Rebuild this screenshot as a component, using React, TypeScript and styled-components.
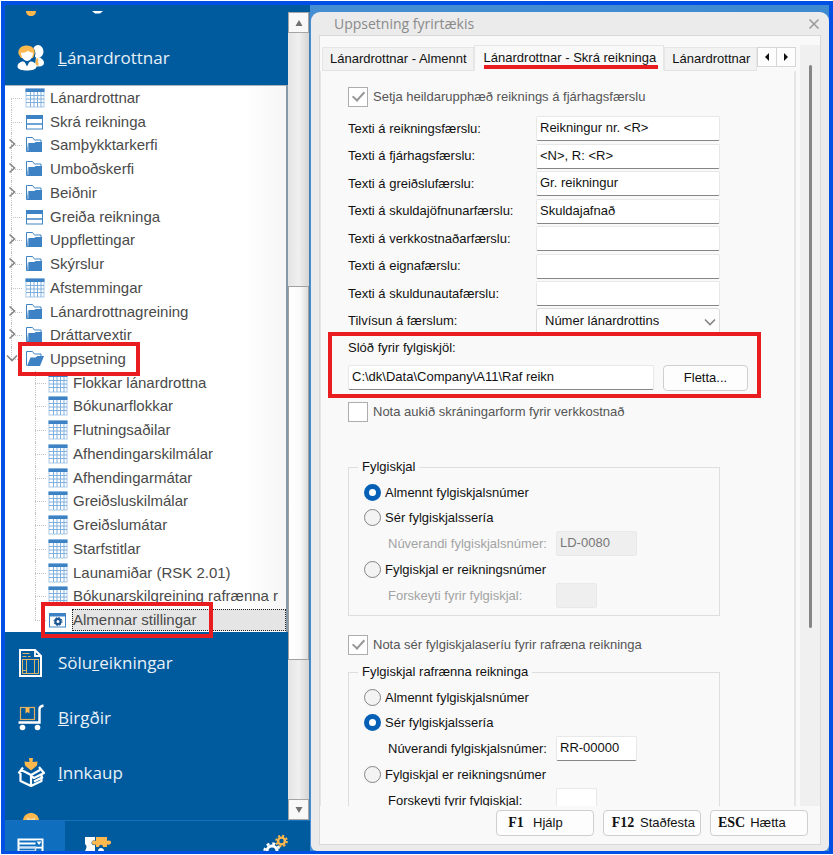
import React, { useState } from "react";
import styled, { createGlobalStyle, css } from "styled-components";

const GlobalStyle = createGlobalStyle`
  * { box-sizing: border-box; }
  body { margin: 0; background: #fff; }
  button, input, select { font: inherit; color: inherit; margin: 0; }
  svg { display: block; }
`;

const RED = "#e91d1f";
const UI_FONT = '"Liberation Sans", Arial, sans-serif';
const NAV_FONT = '"Open Sans", "Noto Sans", sans-serif';

const Page = styled.div`
  height: 100vh;
  padding: 1px 0 1px 1px;
`;

const Frame = styled.div`
  display: flex;
  height: 100%;
  border: 4px solid #0050e6;
  border-bottom-width: 3px;
  background: linear-gradient(90deg, #4a90d6, #3d8ad0);
  overflow: hidden;
`;

const Sidebar = styled.aside`
  flex: none;
  width: 305px;
  display: flex;
  flex-direction: column;
  background: #005a9e;
  font-family: ${NAV_FONT};
`;

const SidebarBody = styled.div`
  flex: 1;
  min-height: 0;
  display: flex;
`;

const ModuleList = styled.nav`
  flex: 1;
  min-width: 0;
  display: flex;
  flex-direction: column;
  overflow: hidden;
`;

const ModuleButton = styled.button`
  flex: none;
  height: 55px;
  display: flex;
  align-items: center;
  gap: 11px;
  padding: 0 0 0 12px;
  border: 0;
  background: none;
  color: #e8f1f8;
  font-size: 17px;
  text-align: left;
`;

const ClippedTop = styled.div`
  flex: none;
  height: 25px;
  padding: 6px 0 0 21px;
`;

const ClippedBottom = styled.div`
  flex: none;
  height: 20px;
  padding: 12px 0 0 18px;
  overflow: hidden;
`;

const Tree = styled.ul`
  flex: 1;
  min-height: 0;
  display: grid;
  grid-auto-rows: 1fr;
  margin: 0 0 3px;
  padding: 0;
  list-style: none;
  background: linear-gradient(90deg, #fff 85%, #f6f6f6);
  border-top: 1px solid #a9b4bd;
  border-right: 2px solid #8799a8;
  color: #4a4a4a;
  font: 15px/20px ${UI_FONT};
`;

const TreeRow = styled.li<{ $child?: boolean; $first?: boolean; $last?: boolean }>`
  position: relative;
  display: flex;
  align-items: center;
  padding-left: ${(p) => (p.$child ? 43 : 20)}px;
  min-width: 0;

  &::before {
    content: "";
    position: absolute;
    left: ${(p) => (p.$child ? 30 : 6)}px;
    top: ${(p) => (p.$first ? "50%" : "0")};
    bottom: ${(p) => (p.$last ? "50%" : "0")};
    border-left: 1px dotted #c4c4c4;
  }
  &::after {
    content: "";
    position: absolute;
    left: ${(p) => (p.$child ? 30 : 6)}px;
    top: 50%;
    width: 11px;
    border-top: 1px dotted #c4c4c4;
  }
`;

const TreeItem = styled.span<{ $fill?: boolean }>`
  position: relative;
  display: flex;
  align-items: center;
  gap: 4px;
  min-width: 0;
  ${(p) => p.$fill && "flex: 1;"}

  svg { flex: none; }
`;

const Mark = styled.span<{ $wide?: boolean }>`
  position: absolute;
  z-index: 2;
  top: -7px;
  bottom: -7px;
  left: -7px;
  ${(p) => (p.$wide ? "width: 172px;" : "right: -14px;")}
  border: 4px solid ${RED};
`;

const TreeLabel = styled.span<{ $selected?: boolean }>`
  padding-left: 1px;
  white-space: nowrap;
  ${(p) =>
    p.$selected &&
    css`
      flex: 1;
      line-height: 22px;
      background: #e5e5e5;
      outline: 1px dotted #222;
      outline-offset: -1px;
    `}
`;

const Expander = styled.button`
  position: absolute;
  z-index: 1;
  left: 0;
  top: 50%;
  width: 14px;
  height: 14px;
  margin-top: -8px;
  padding: 0;
  border: 0;
  background: none;
  display: grid;
  place-items: center;
`;

const ScrollColumn = styled.div`
  flex: none;
  width: 22px;
  margin: 7px 0 0;
  display: flex;
  flex-direction: column;
  background: linear-gradient(90deg, #e4e4e4, #f0f0f0 50%, #d4d4d4);
  border-right: 1px solid #4a80b0;
`;

const ScrollArrow = styled.button`
  flex: none;
  height: 21px;
  padding: 0;
  border: 1px solid #a5a5a5;
  background: #f8f8f8;
  color: #707070;
  display: grid;
  place-items: center;
`;

const ScrollThumb = styled.div`
  flex: 373 0 0;
  border: 1px solid #a0a0a0;
  background: linear-gradient(90deg, #fff, #fafafa 60%, #dcdcdc);
`;

const Space = styled.div<{ $grow: number }>`
  flex: ${(p) => p.$grow} 0 0;
`;

const BottomBar = styled.div`
  flex: none;
  height: 31px;
  display: flex;
  align-items: flex-start;
  border-top: 1px solid #1a70bd;
  overflow: hidden;
`;

const BottomTab = styled.button<{ $active?: boolean; $end?: boolean }>`
  height: 40px;
  width: 60px;
  padding: ${(p) => (p.$end ? "12px 0 0 12px" : p.$active ? "14px 0 0 12px" : "14px 0 0 18px")};
  border: 0;
  display: flex;
  align-items: flex-start;
  background: ${(p) => (p.$active ? "#106ebe" : "none")};
  ${(p) => p.$end && "margin-left: auto;"}
`;

const Dialog = styled.section`
  flex: 1;
  min-width: 0;
  margin: 7px 0 0 1px;
  padding: 0 8px 6px;
  display: flex;
  flex-direction: column;
  background: #ebebeb;
  border-radius: 9px 9px 6px 6px;
  color: #111;
  font: 13px/16px ${UI_FONT};
`;

const TitleBar = styled.header`
  flex: none;
  height: 23px;
  display: flex;
  align-items: center;
  justify-content: space-between;
  padding: 0 1px 0 15px;
  color: #8a8a8a;
  font: 14px/20px ${NAV_FONT};
`;

const Title = styled.h1`
  margin: 0;
  font: inherit;
`;

const CloseButton = styled.button`
  padding: 0;
  border: 0;
  width: 12px;
  height: 12px;
  background: none;
  display: grid;
`;

const Panel = styled.div`
  flex: 1;
  min-height: 0;
  display: flex;
  flex-direction: column;
  border: 1px solid #d9d9d9;
  background: #f9f9f9;
`;

const Scroller = styled.div`
  flex: 1;
  min-height: 0;
  margin-top: 9px;
  display: flex;
`;

const TabArea = styled.div`
  flex: 1;
  min-width: 0;
  display: flex;
  flex-direction: column;
`;

const Gutter = styled.div`
  flex: none;
  width: 20px;
  margin-left: 4px;
  padding: 20px 0 0 9px;
  display: flex;
  flex-direction: column;
  background: #f0f0f0;
`;

const GutterThumb = styled.div`
  flex: 562 0 0;
  width: 3px;
  border-radius: 2px;
  background: #858585;
`;

const TabStrip = styled.div`
  flex: none;
  height: 26px;
  display: flex;
  align-items: flex-end;
  padding-left: 2px;
`;

const Tab = styled.button<{ $active?: boolean; $cut?: boolean }>`
  flex: none;
  height: ${(p) => (p.$active ? 26 : 24)}px;
  padding: ${(p) => (p.$active ? "0 5px 1px 9px" : "0 6px 0 7px")};
  border: 1px solid #e6e6e6;
  border-bottom-color: ${(p) => (p.$active ? "#f9f9f9" : "#e2e2e2")};
  background: ${(p) => (p.$active ? "#f9f9f9" : "#f2f2f2")};
  white-space: nowrap;
  ${(p) => p.$cut && "flex: 1 1 0; min-width: 0; overflow: hidden; text-align: left;"}
`;

const TabText = styled.span<{ $marked?: boolean }>`
  display: block;
  ${(p) => p.$marked && `height: 22px; padding: 3px 2px 0 0; border-bottom: 4px solid ${RED};`}
`;

const TabArrows = styled.div`
  flex: none;
  display: flex;
  height: 20px;
  align-self: flex-start;
  margin-top: 2px;
`;

const TabArrow = styled.button`
  width: 20px;
  padding: 0;
  border: 1px solid #d6d6d6;
  background: #fdfdfd;
  display: grid;
  place-items: center;
  & + & { margin-left: -1px; }
`;

const TabPage = styled.div`
  flex: 1;
  min-height: 0;
  overflow: hidden;
  padding: 16px 74px 0 27px;
  border: solid #e6e6e6;
  border-width: 0 2px 0 1px;
`;

const CheckLine = styled.label<{ $gap?: number }>`
  display: flex;
  align-items: center;
  gap: 5px;
  height: 20px;
  margin-top: ${(p) => p.$gap ?? 0}px;
  color: #555;
  white-space: nowrap;
`;

const CheckBox = styled.input.attrs({ type: "checkbox" })`
  appearance: none;
  flex: none;
  width: 20px;
  height: 20px;
  border: 1px solid #adadad;
  background: #fff;
  display: grid;
  place-items: center;

  &:checked::after {
    content: "";
    width: 5px;
    height: 10px;
    margin-top: -4px;
    border: solid #969696;
    border-width: 0 2px 2px 0;
    transform: rotate(42deg);
  }
`;

const FieldGrid = styled.div`
  display: grid;
  grid-auto-rows: 1fr;
  height: 220px;
  margin-top: 8px;
`;

const FieldRow = styled.div`
  display: grid;
  grid-template-columns: 188px 1fr;
  align-items: center;
`;

const TextBox = styled.input<{ $short?: number }>`
  width: ${(p) => (p.$short ? `${p.$short}px` : "100%")};
  min-width: 0;
  height: 25px;
  padding: 0 3px 2px;
  border: 1px solid #e8e8e8;
  border-bottom-color: #868686;
  border-radius: 2px;
  background: #fff;
  outline: 0;

  &:disabled {
    background: #efefef;
    border-color: #e9e9e9;
    color: #777;
  }
`;

const SelectWrap = styled.div`
  position: relative;
  svg { position: absolute; right: 4px; top: 8px; pointer-events: none; }
`;

const Select = styled.select`
  appearance: none;
  display: block;
  width: 100%;
  height: 27px;
  padding: 0 24px 0 8px;
  border: 1px solid #dcdcdc;
  border-radius: 3px;
  background: #fdfdfd;
  outline: 0;
`;

const PathGroup = styled.div`
  position: relative;
  z-index: 1;
  margin: -3px -41px 0 -20px;
  padding: 4px 9px 3px 16px;
  border: 4px solid ${RED};
`;

const PathLabel = styled.label`
  display: block;
  height: 25px;
`;

const PathRow = styled.div`
  display: flex;
  gap: 9px;
`;

const PushButton = styled.button<{ $wide?: boolean }>`
  flex: none;
  width: ${(p) => (p.$wide ? 98 : 85)}px;
  height: 26px;
  padding: ${(p) => (p.$wide ? "0 0 0 7px" : "0")};
  border: 1px solid #cfcfcf;
  border-radius: 4px;
  background: #fdfdfd;
  display: flex;
  align-items: center;
  justify-content: ${(p) => (p.$wide ? "flex-start" : "center")};
  gap: 5px;
  white-space: nowrap;
`;

const KeyName = styled.b`
  min-width: 24px;
  font: bold 14px/16px "Liberation Serif", serif;
`;

const Group = styled.fieldset<{ $gap: number }>`
  margin: ${(p) => p.$gap}px 0 0;
  padding: 5px 0 6px 15px;
  min-width: 0;
  border: 1px solid #dedede;
`;

const Legend = styled.legend`
  margin-left: -6px;
  padding: 0 4px;
`;

const RadioLine = styled.label`
  display: flex;
  align-items: center;
  gap: 4px;
  height: 25px;
`;

const Radio = styled.input.attrs({ type: "radio" })`
  appearance: none;
  flex: none;
  width: 17px;
  height: 17px;
  border: 1px solid #858585;
  border-radius: 50%;
  background: #f3f3f3;

  &:checked {
    border: 5px solid #0560b6;
    background: #fff;
  }
`;

const SubRow = styled.div<{ $muted?: boolean }>`
  display: grid;
  grid-template-columns: 168px 1fr;
  align-items: center;
  height: 27px;
  padding-left: 24px;
  color: ${(p) => (p.$muted ? "#a3a3a3" : "inherit")};
`;

const Footer = styled.footer`
  flex: none;
  display: flex;
  justify-content: flex-end;
  gap: 9px;
  padding: 4px 12px 8px;
`;

/* ---------- icons ---------- */

const GridIcon = () => (
  <svg width="20" height="20" viewBox="0 0 20 20">
    <rect x="1" y="1" width="18" height="18" fill="#fff" stroke="#a9c9e8" />
    <path d="M5.5 4v15M9 4v15M12.5 4v15M16 4v15M1 7.5h18M1 11h18M1 14.500h18" stroke="#7fb0de" />
    <path d="M.5 .500h19v3.500h-19z" fill="#3d82c4" />
  </svg>
);

const ListIcon = () => (
  <svg width="20" height="20" viewBox="0 0 20 20">
    <rect x="1.500" y="3.500" width="16" height="13.500" fill="#fff" stroke="#3f85c6" />
    <path d="M1 3h17v4H1z" fill="#3d82c4" />
    <path d="M1 12h17" stroke="#3f85c6" strokeWidth="1.500" />
  </svg>
);

const FolderIcon = () => (
  <svg width="20" height="20" viewBox="0 0 20 20">
    <path d="M1.500 16.500v-14h6l2 2.500h6.500v2" fill="#fff" stroke="#3f85c6" />
    <path d="M3 8h6l2-1h6v10H1.500z" fill="#3d82c4" />
    <path d="M3 7v9" stroke="#fff" strokeWidth=".6" />
  </svg>
);

const OpenFolderIcon = () => (
  <svg width="20" height="20" viewBox="0 0 20 20">
    <path d="M1.500 16.500v-14h6l2 2.500h6.500v3" fill="#fff" stroke="#3f85c6" />
    <path d="M5.500 8.500h5l2-1.500h6.500l-4 10H2z" fill="#3d82c4" />
  </svg>
);

const SettingsIcon = () => (
  <svg width="20" height="20" viewBox="0 0 20 20">
    <rect x="1.500" y="3.500" width="16" height="13.500" fill="#fff" stroke="#3f85c6" />
    <path d="M1 3h17v3.500H1z" fill="#3d82c4" />
    <circle cx="10" cy="11.500" r="2.600" fill="none" stroke="#1b5592" strokeWidth="2.200" />
    <circle cx="10" cy="11.500" r="4" fill="none" stroke="#1b5592" strokeWidth="1" strokeDasharray="1.600 1.540" />
  </svg>
);

const PeopleIcon = () => (
  <svg width="30" height="28" viewBox="0 0 30 28">
    <ellipse cx="21" cy="7.500" rx="5.500" ry="6.500" fill="#fff" />
    <path d="M19 13c5 0 8 3 8 6 0 2-2 3.500-5 3.500h-4z" fill="#fff" />
    <path d="M19 15l2-1 .5 8-3-1z" fill="#ffb84d" />
    <circle cx="10" cy="9.500" r="8.500" fill="#005a9e" />
    <path d="M1.500 10C.5 4 5 1.500 10 1.500S18.500 5 17.500 10L16 14H4z" fill="#ffb84d" />
    <path d="M4 8.500c3 1 6-.5 7-2 1 1.500 3 2 5 2 0 5-3 8.500-6 8.500s-6-4-6-8.500z" fill="#fff" />
    <path d="M.5 22.500c0-3 3-5 6-5l3.500 2 3.500-2c3 0 6 2 6 5 0 3-5 4-9.500 4s-9.500-1-9.500-4z" fill="#fff" />
    <path d="M7.500 17.500l2.500 5 2.500-5" fill="#005a9e" />
  </svg>
);

const InvoiceIcon = () => (
  <svg width="30" height="30" viewBox="0 0 30 30" fill="none">
    <path d="M3 2h15l6 6v20H3z" stroke="#fff" strokeWidth="2" />
    <path d="M18 2v6h6" stroke="#fff" strokeWidth="1.800" />
    <path d="M5.500 5.500h7M5.500 8.500h4M11 8.500h2.500M5.500 11.500h16.500M5.500 11v14.500h16V11.500M9.500 11.500v14M17.500 11.500v14M5.500 22.500h4" stroke="#d9b56c" />
  </svg>
);

const CartIcon = () => (
  <svg width="30" height="30" viewBox="0 0 30 30" fill="none">
    <rect x="3.500" y="4.500" width="14" height="12" stroke="#e0b062" strokeWidth="1.200" />
    <path d="M8.500 5h4v5.500l-2-1.500-2 1.500z" fill="#ffb84d" />
    <path d="M1.500 19.500H22.500V6c0-2 1.500-3 4-3.500" stroke="#fff" strokeWidth="2.400" />
    <circle cx="5.500" cy="24.500" r="2.800" fill="#fff" />
    <circle cx="20.500" cy="24.500" r="2.800" fill="#fff" />
  </svg>
);

const BoxIcon = () => (
  <svg width="30" height="30" viewBox="0 0 30 30" fill="none">
    <g stroke="#fff" strokeWidth="2.200" strokeLinejoin="round">
      <path d="M3.500 15v8l10.500 5 10.500-5v-6M14 17v11" />
      <path d="M6 9.500l-4.500 6M3.500 11.500L14 17l9-5M22 9l5 6-10 5M14 17l3 3.500" />
      <path d="M17 23.500l9-4.500" />
    </g>
    <path d="M12 0h4l-.5 4 5-.5-.5 4-6 5-6-5-.5-4 5 .500z" fill="#ffb84d" />
  </svg>
);

const FaceTopIcon = () => (
  <svg width="16" height="8" viewBox="0 0 16 8">
    <path d="M0 8C1 3 4 1 8 1s7 2 8 7z" fill="#ffb84d" />
    <path d="M4 5.500l4 1.500 4-1.500v2.500H4z" fill="#f6d9a8" />
  </svg>
);

const TopRemnants = () => (
  <svg width="90" height="6" viewBox="0 0 90 6">
    <path d="M0 0h10c0 3-2 5-5 5S0 3 0 0z" fill="#ffb84d" />
    <path d="M66 0h11l-3 2.500h-5z" fill="#fff" />
  </svg>
);

const WindowIcon = () => (
  <svg width="27" height="18" viewBox="0 0 27 18">
    <path d="M1.500 5.500h24v8h-24zM1.500 9.500h17M1.500 13v5M25.500 13v5" fill="none" stroke="#fff" strokeWidth="2" transform="translate(0 -1)" />
    <path d="M1.500 12.500h17v6M1.500 16h17" fill="none" stroke="#cfe3f5" strokeWidth="1.500" />
    <path d="M19.500 5.500h5v6h-5z" fill="#106ebe" />
    <path d="M19.500 6.500h5L22 10z" fill="#fff" />
  </svg>
);

const PuzzleIcon = () => (
  <svg width="28" height="16" viewBox="0 0 28 16">
    <path d="M2 2h10v3.500a2.500 2.500 0 1 0 0 4.500V16H2c2-4 2-5 0-7z" fill="#fff" />
    <path d="M13 2h11v4c3-1 4 0 4 1.500S27 10 24 9.500V12h-4c0-3-4-3-4 0h-3V9.500c-3 1-4-.5-4-2S10 5 13 6z" fill="#ffb84d" />
    <path d="M15 16c0-4 6-4 6 0z" fill="#fff" />
  </svg>
);

const GearsIcon = () => (
  <svg width="28" height="18" viewBox="0 0 28 18" fill="none">
    <circle cx="19.500" cy="8" r="3.400" stroke="#ffb84d" strokeWidth="2.400" />
    <circle cx="19.500" cy="8" r="5.300" stroke="#ffb84d" strokeWidth="2" strokeDasharray="2.100 2.060" />
    <circle cx="10" cy="18" r="5" stroke="#fff" strokeWidth="3" />
    <circle cx="10" cy="18" r="7.500" stroke="#fff" strokeWidth="2.400" strokeDasharray="3 2.900" />
  </svg>
);

const Chevron = ({ down = false }: { down?: boolean }) => (
  <svg width="12" height="12" viewBox="0 0 12 12" fill="none" stroke="#858585" strokeWidth="1.600">
    <path d={down ? "M1 3.500l5 5 5-5" : "M3.500 1.500L8.500 6l-5 4.500"} />
  </svg>
);

const Arrow = ({ d, color = "#707070" }: { d: string; color?: string }) => (
  <svg width="8" height="8" viewBox="0 0 8 8">
    <path d={d} fill={color} />
  </svg>
);

/* ---------- data ---------- */

type IconKind = "grid" | "list" | "folder" | "open" | "settings";

const ICONS: Record<IconKind, () => React.JSX.Element> = {
  grid: GridIcon,
  list: ListIcon,
  folder: FolderIcon,
  open: OpenFolderIcon,
  settings: SettingsIcon,
};

const ROOT_ITEMS: [string, IconKind][] = [
  ["Lánardrottnar", "grid"],
  ["Skrá reikninga", "list"],
  ["Samþykktarkerfi", "folder"],
  ["Umboðskerfi", "folder"],
  ["Beiðnir", "folder"],
  ["Greiða reikninga", "list"],
  ["Uppflettingar", "folder"],
  ["Skýrslur", "folder"],
  ["Afstemmingar", "grid"],
  ["Lánardrottnagreining", "folder"],
  ["Dráttarvextir", "folder"],
  ["Uppsetning", "open"],
];

const CHILD_ITEMS: [string, IconKind][] = [
  ["Flokkar lánardrottna", "grid"],
  ["Bókunarflokkar", "grid"],
  ["Flutningsaðilar", "grid"],
  ["Afhendingarskilmálar", "grid"],
  ["Afhendingarmátar", "grid"],
  ["Greiðsluskilmálar", "grid"],
  ["Greiðslumátar", "grid"],
  ["Starfstitlar", "grid"],
  ["Launamiðar (RSK 2.01)", "grid"],
  ["Bókunarskilgreining rafrænna r", "grid"],
  ["Almennar stillingar", "settings"],
];

const TEXT_FIELDS: [string, string][] = [
  ["Texti á reikningsfærslu:", "Reikningur nr. <R>"],
  ["Texti á fjárhagsfærslu:", "<N>, R: <R>"],
  ["Texti á greiðslufærslu:", "Gr. reikningur"],
  ["Texti á skuldajöfnunarfærslu:", "Skuldajafnað"],
  ["Texti á verkkostnaðarfærslu:", ""],
  ["Texti á eignafærslu:", ""],
  ["Texti á skuldunautafærslu:", ""],
];

interface VoucherGroupProps {
  id: string;
  title: string;
  initial: number;
  number: string;
  disabled?: boolean;
  gap: number;
}

function VoucherGroup({ id, title, initial, number, disabled, gap }: VoucherGroupProps) {
  const [choice, setChoice] = useState(initial);
  const radio = (index: number, text: string) => (
    <RadioLine>
      <Radio name={id} checked={choice === index} onChange={() => setChoice(index)} />
      {text}
    </RadioLine>
  );
  return (
    <Group $gap={gap}>
      <Legend>{title}</Legend>
      {radio(0, "Almennt fylgiskjalsnúmer")}
      {radio(1, "Sér fylgiskjalssería")}
      <SubRow $muted={disabled}>
        <label htmlFor={`${id}-number`}>Núverandi fylgiskjalsnúmer:</label>
        <TextBox id={`${id}-number`} $short={81} defaultValue={number} disabled={disabled} />
      </SubRow>
      {radio(2, "Fylgiskjal er reikningsnúmer")}
      <SubRow $muted={disabled}>
        <label htmlFor={`${id}-prefix`}>Forskeyti fyrir fylgiskjal:</label>
        <TextBox id={`${id}-prefix`} $short={41} disabled={disabled} />
      </SubRow>
    </Group>
  );
}

interface TreeEntryProps {
  name: string;
  icon: IconKind;
  child?: boolean;
  first?: boolean;
  last?: boolean;
}

function TreeEntry({ name, icon, child, first, last }: TreeEntryProps) {
  const Icon = ICONS[icon];
  const open = icon === "open";
  const selected = icon === "settings";
  return (
    <TreeRow $child={child} $first={first} $last={last}>
      {(icon === "folder" || open) && (
        <Expander aria-label={name}>
          <Chevron down={open} />
        </Expander>
      )}
      <TreeItem $fill={selected}>
        <Icon />
        <TreeLabel $selected={selected}>{name}</TreeLabel>
        {(open || selected) && <Mark $wide={selected} />}
      </TreeItem>
    </TreeRow>
  );
}

export default function App() {
  return (
    <Page>
      <GlobalStyle />
      <Frame>
        <Sidebar>
          <SidebarBody>
            <ModuleList>
              <ClippedTop>
                <TopRemnants />
              </ClippedTop>
              <ModuleButton>
                <PeopleIcon />
                <span><u>L</u>ánardrottnar</span>
              </ModuleButton>
              <Tree>
                {ROOT_ITEMS.map(([name, icon], i) => (
                  <TreeEntry key={name} name={name} icon={icon} first={i === 0} last={i === ROOT_ITEMS.length - 1} />
                ))}
                {CHILD_ITEMS.map(([name, icon], i) => (
                  <TreeEntry key={name} name={name} icon={icon} child last={i === CHILD_ITEMS.length - 1} />
                ))}
              </Tree>
              <ModuleButton>
                <InvoiceIcon />
                <span>Sölu<u>r</u>eikningar</span>
              </ModuleButton>
              <ModuleButton>
                <CartIcon />
                <span><u>B</u>irgðir</span>
              </ModuleButton>
              <ModuleButton>
                <BoxIcon />
                <span><u>I</u>nnkaup</span>
              </ModuleButton>
              <ClippedBottom>
                <FaceTopIcon />
              </ClippedBottom>
            </ModuleList>
            <ScrollColumn>
              <ScrollArrow aria-label="Upp">
                <Arrow d="M4 1l3.500 6h-7z" />
              </ScrollArrow>
              <Space $grow={254} />
              <ScrollThumb />
              <Space $grow={140} />
              <ScrollArrow aria-label="Niður">
                <Arrow d="M4 7l3.500-6h-7z" />
              </ScrollArrow>
            </ScrollColumn>
          </SidebarBody>
          <BottomBar>
            <BottomTab $active aria-label="Gluggar"><WindowIcon /></BottomTab>
            <BottomTab aria-label="Einingar"><PuzzleIcon /></BottomTab>
            <BottomTab $end aria-label="Stillingar"><GearsIcon /></BottomTab>
          </BottomBar>
        </Sidebar>

        <Dialog>
          <TitleBar>
            <Title>Uppsetning fyrirtækis</Title>
            <CloseButton aria-label="Loka">
              <svg width="12" height="12" viewBox="0 0 12 12" stroke="#999" strokeWidth="1.500">
                <path d="M1.500 1.500l9 9M10.500 1.500l-9 9" />
              </svg>
            </CloseButton>
          </TitleBar>
          <Panel>
            <Scroller>
              <TabArea>
                <TabStrip role="tablist">
                  <Tab role="tab"><TabText>Lánardrottnar - Almennt</TabText></Tab>
                  <Tab role="tab" $active aria-selected><TabText $marked>Lánardrottnar - Skrá reikninga</TabText></Tab>
                  <Tab role="tab" $cut><TabText>Lánardrottnar</TabText></Tab>
                  <TabArrows>
                    <TabArrow aria-label="Fyrri"><Arrow d="M6 0v8L2 4z" color="#111" /></TabArrow>
                    <TabArrow aria-label="Næsti"><Arrow d="M2 0v8l4-4z" color="#111" /></TabArrow>
                  </TabArrows>
                </TabStrip>
                <TabPage>
                  <CheckLine>
                    <CheckBox defaultChecked />
                    Setja heildarupphæð reiknings á fjárhagsfærslu
                  </CheckLine>
                  <FieldGrid>
                    {TEXT_FIELDS.map(([label, value], i) => (
                      <FieldRow key={label}>
                        <label htmlFor={`text-${i}`}>{label}</label>
                        <TextBox id={`text-${i}`} defaultValue={value} />
                      </FieldRow>
                    ))}
                    <FieldRow>
                      <label htmlFor="reference">Tilvísun á færslum:</label>
                      <SelectWrap>
                        <Select id="reference" defaultValue="n">
                          <option value="n">Númer lánardrottins</option>
                        </Select>
                        <Chevron down />
                      </SelectWrap>
                    </FieldRow>
                  </FieldGrid>
                  <PathGroup>
                    <PathLabel htmlFor="path">Slóð fyrir fylgiskjöl:</PathLabel>
                    <PathRow>
                      <TextBox id="path" defaultValue={"C:\\dk\\Data\\Company\\A11\\Raf reikn"} />
                      <PushButton>Fletta...</PushButton>
                    </PathRow>
                  </PathGroup>
                  <CheckLine $gap={4}>
                    <CheckBox />
                    Nota aukið skráningarform fyrir verkkostnað
                  </CheckLine>
                  <VoucherGroup id="voucher" title="Fylgiskjal" initial={0} number="LD-0080" disabled gap={37} />
                  <CheckLine $gap={19}>
                    <CheckBox defaultChecked />
                    Nota sér fylgiskjalaseríu fyrir rafræna reikninga
                  </CheckLine>
                  <VoucherGroup id="evoucher" title="Fylgiskjal rafrænna reikninga" initial={1} number="RR-00000" gap={9} />
                </TabPage>
              </TabArea>
              <Gutter>
                <GutterThumb />
                <Space $grow={178} />
              </Gutter>
            </Scroller>
            <Footer>
              <PushButton $wide><KeyName>F1</KeyName>Hjálp</PushButton>
              <PushButton $wide><KeyName>F12</KeyName>Staðfesta</PushButton>
              <PushButton $wide><KeyName>ESC</KeyName>Hætta</PushButton>
            </Footer>
          </Panel>
        </Dialog>
      </Frame>
    </Page>
  );
}
